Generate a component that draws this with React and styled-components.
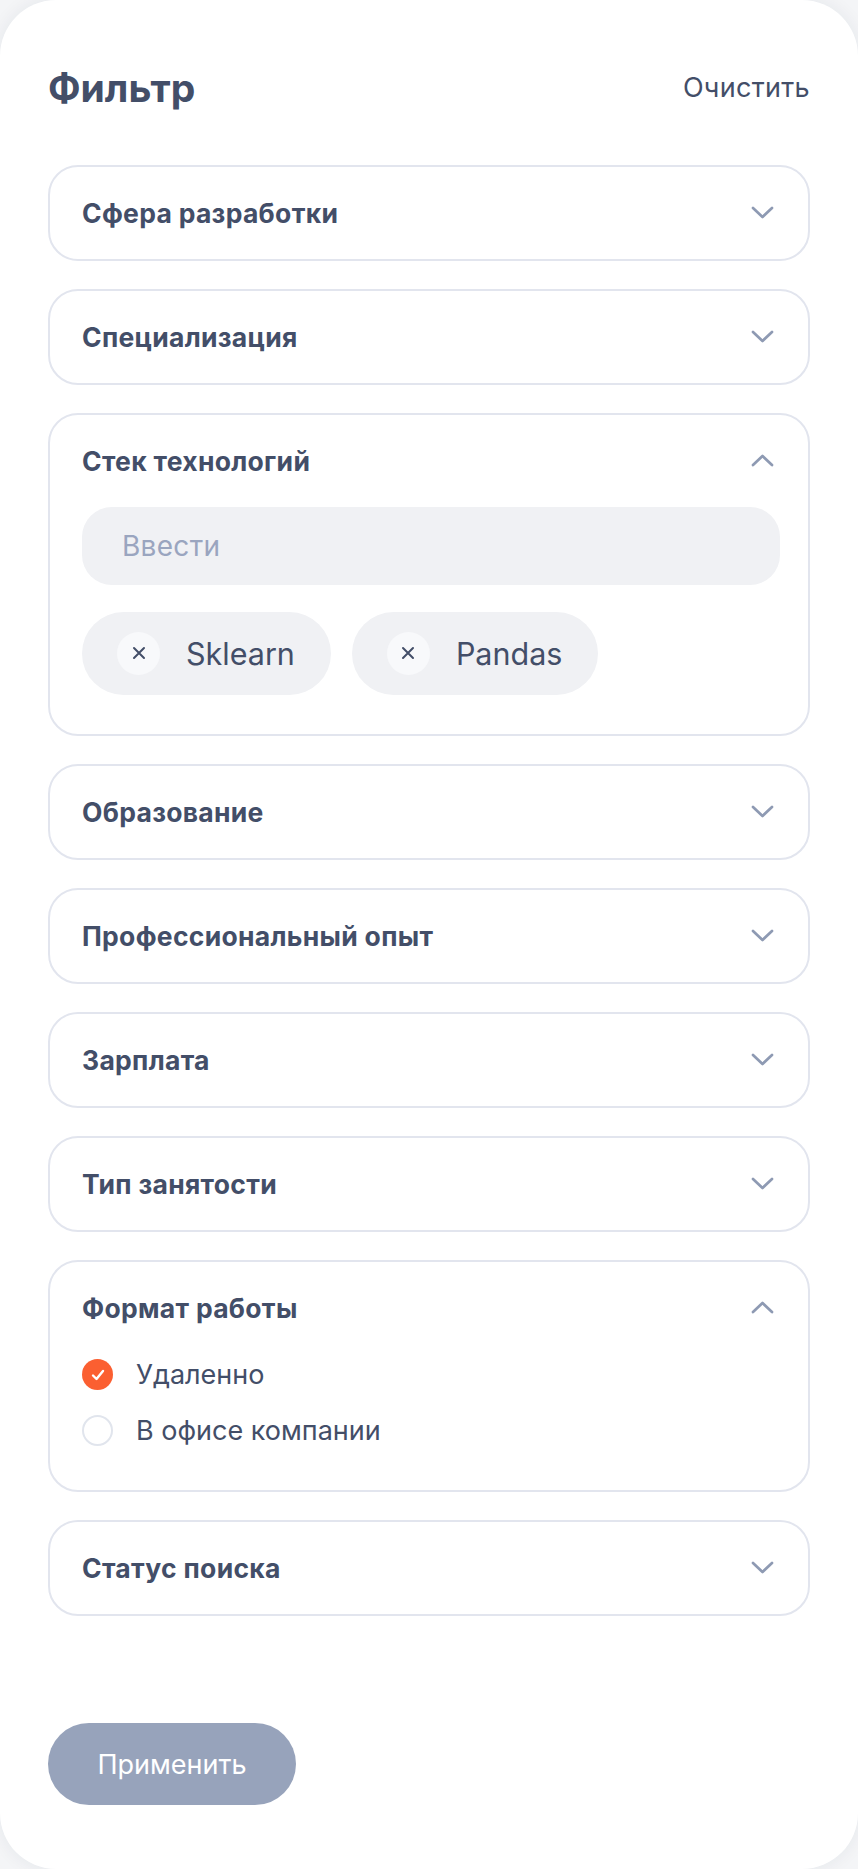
import React from "react";
import styled, { createGlobalStyle } from "styled-components";

const GlobalStyle = createGlobalStyle`
  html, body { margin: 0; padding: 0; background: #f4f5f7; }
  body { font-family: Inter, "Noto Sans", sans-serif; -webkit-font-smoothing: antialiased; }
  * { box-sizing: border-box; }
`;

const Panel = styled.div`
  width: 858px;
  height: 1869px;
  background: #ffffff;
  border-radius: 56px;
  box-shadow: 0 0 18px rgba(30, 40, 70, 0.07);
  padding: 62px 48px 64px;
  display: flex;
  flex-direction: column;
`;

const Header = styled.header`
  display: flex;
  align-items: center;
  justify-content: space-between;
  height: 50px;
`;

const Title = styled.h1`
  margin: 0;
  font-size: 39px;
  font-weight: 700;
  color: #434e68;
`;

const ClearButton = styled.button`
  border: 0;
  background: none;
  padding: 0;
  font-family: inherit;
  font-size: 27px;
  font-weight: 400;
  letter-spacing: 0.3px;
  color: #434e68;
  cursor: pointer;
`;

const List = styled.div`
  margin-top: 53px;
  display: flex;
  flex-direction: column;
  gap: 28.5px;
`;

const Card = styled.section`
  border: 2px solid #e2e5ee;
  border-radius: 30px;
  background: #ffffff;
`;

const CardHeader = styled.div`
  height: 91.5px;
  display: flex;
  align-items: center;
  justify-content: space-between;
  padding: 0 34px 0 32px;
`;

const CardTitle = styled.h2`
  margin: 0;
  font-size: 26.5px;
  font-weight: 700;
  letter-spacing: 0.3px;
  color: #434e68;
`;

const CardBody = styled.div`
  padding: ${(p) => p.$pad};
`;

const SearchInput = styled.input`
  display: block;
  width: 100%;
  height: 78px;
  border: 0;
  border-radius: 30px;
  background: #f0f1f4;
  padding: 0 40px;
  font-family: inherit;
  font-size: 28px;
  letter-spacing: 0.3px;
  color: #434e68;
  outline: none;
  &::placeholder { color: #9aa5bf; }
`;

const Chips = styled.div`
  margin-top: 27px;
  display: flex;
  gap: 21px;
`;

const Chip = styled.div`
  height: 83px;
  display: inline-flex;
  align-items: center;
  gap: 26px;
  padding: 0 36px 0 35px;
  border-radius: 42px;
  background: #f0f1f4;
  font-size: 30.5px;
  color: #434e68;
`;

const ChipRemove = styled.span`
  width: 43px;
  height: 43px;
  border-radius: 50%;
  background: #f8f9fb;
  display: flex;
  align-items: center;
  justify-content: center;
`;

const Options = styled.div`
  display: flex;
  flex-direction: column;
  gap: 20px;
`;

const Option = styled.label`
  height: 36px;
  display: flex;
  align-items: center;
  gap: 23px;
  font-size: 27px;
  color: #434e68;
`;

const Radio = styled.span`
  width: 31px;
  height: 31px;
  border-radius: 50%;
  flex: none;
  display: flex;
  align-items: center;
  justify-content: center;
  background: ${(p) => (p.$checked ? "#fb5f31" : "#ffffff")};
  border: ${(p) => (p.$checked ? "none" : "2px solid #e1e5ed")};
`;

const ApplyButton = styled.button`
  margin-top: auto;
  align-self: flex-start;
  width: 248px;
  height: 82px;
  border: 0;
  border-radius: 41px;
  background: #97a3bb;
  color: #ffffff;
  font-family: inherit;
  font-size: 27px;
  font-weight: 400;
  cursor: pointer;
`;

const Chevron = ({ up }) => (
  <svg width="23" height="13" viewBox="0 0 23 13" fill="none">
    <polyline
      points={up ? "2,11 11.5,2 21,11" : "2,2 11.5,11 21,2"}
      stroke="#8e9ab3"
      strokeWidth="2.7"
      strokeLinecap="round"
      strokeLinejoin="round"
    />
  </svg>
);

const Cross = () => (
  <svg width="14" height="14" viewBox="0 0 14 14" fill="none">
    <path d="M2 2L12 12M12 2L2 12" stroke="#434e68" strokeWidth="2" strokeLinecap="round" />
  </svg>
);

const Check = () => (
  <svg width="16" height="14" viewBox="0 0 16 14" fill="none">
    <path d="M3 7.5L6.5 11L13 3" stroke="#ffffff" strokeWidth="2.4" strokeLinecap="round" strokeLinejoin="round" />
  </svg>
);

const Section = ({ title, open, children }) => (
  <Card>
    <CardHeader>
      <CardTitle>{title}</CardTitle>
      <Chevron up={open} />
    </CardHeader>
    {open && children}
  </Card>
);

export default function App() {
  return (
    <>
      <GlobalStyle />
      <Panel>
        <Header>
          <Title>Фильтр</Title>
          <ClearButton>Очистить</ClearButton>
        </Header>
        <List>
          <Section title="Сфера разработки" />
          <Section title="Специализация" />
          <Section title="Стек технологий" open>
            <CardBody $pad="0 28px 39px 32px">
              <SearchInput placeholder="Ввести" />
              <Chips>
                {["Sklearn", "Pandas"].map((t) => (
                  <Chip key={t}>
                    <ChipRemove>
                      <Cross />
                    </ChipRemove>
                    {t}
                  </Chip>
                ))}
              </Chips>
            </CardBody>
          </Section>
          <Section title="Образование" />
          <Section title="Профессиональный опыт" />
          <Section title="Зарплата" />
          <Section title="Тип занятости" />
          <Section title="Формат работы" open>
            <CardBody $pad="3px 28px 41px 32px">
              <Options>
                <Option>
                  <Radio $checked>
                    <Check />
                  </Radio>
                  Удаленно
                </Option>
                <Option>
                  <Radio />
                  В офисе компании
                </Option>
              </Options>
            </CardBody>
          </Section>
          <Section title="Статус поиска" />
        </List>
        <ApplyButton>Применить</ApplyButton>
      </Panel>
    </>
  );
}
